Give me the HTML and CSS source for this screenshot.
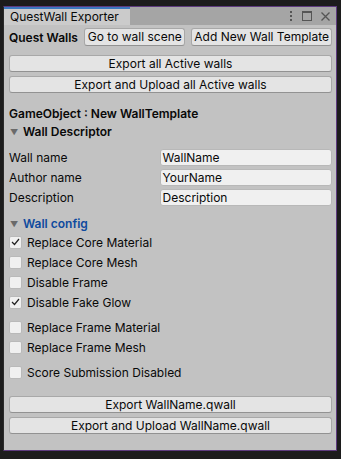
FILE: index.html
```html
<!DOCTYPE html>
<html>
<head>
<meta charset="utf-8">
<link rel="stylesheet" href="styles.css">
</head>
<body>
<div class="window">
  <div class="tabbar">
    <div class="tab">QuestWall Exporter</div>
    <div class="tab-icons">
      <svg width="4" height="10" viewBox="0 0 4 10"><rect x="1" y="0" width="2" height="2" fill="#555"/><rect x="1" y="4" width="2" height="2" fill="#555"/><rect x="1" y="8" width="2" height="2" fill="#555"/></svg>
      <svg width="10" height="10" viewBox="0 0 10 10"><rect x="0.5" y="0.5" width="9" height="9" fill="none" stroke="#555"/><rect x="0" y="0" width="10" height="2" fill="#555"/></svg>
      <svg width="9" height="9" viewBox="0 0 9 9"><path d="M0.5 0.5 L8.5 8.5 M8.5 0.5 L0.5 8.5" stroke="#555" stroke-width="1.3"/></svg>
    </div>
  </div>
  <div class="content">
    <div class="toprow">
      <span class="bold">Quest Walls</span>
      <button class="btn btn-scene">Go to wall scene</button>
      <button class="btn btn-add">Add New Wall Template</button>
    </div>
    <button class="btn wide first">Export all Active walls</button>
    <button class="btn wide">Export and Upload all Active walls</button>
    <div class="bold gameobject">GameObject : New WallTemplate</div>
    <div class="foldout bold"><span class="tri">&#9660;</span>Wall Descriptor</div>
    <div class="fields">
      <div class="field"><span class="label">Wall name</span><span class="input">WallName</span></div>
      <div class="field"><span class="label">Author name</span><span class="input">YourName</span></div>
      <div class="field"><span class="label">Description</span><span class="input">Description</span></div>
    </div>
    <div class="foldout bold blue config"><span class="tri">&#9660;</span>Wall config</div>
    <div class="checks">
      <div class="check"><span class="box checked"><svg width="9" height="8" viewBox="0 0 9 8"><path d="M1 4 L3.5 6.5 L8 1" fill="none" stroke="#222" stroke-width="1.2"/></svg></span>Replace Core Material</div>
      <div class="check"><span class="box"></span>Replace Core Mesh</div>
      <div class="check"><span class="box"></span>Disable Frame</div>
      <div class="check"><span class="box checked"><svg width="9" height="8" viewBox="0 0 9 8"><path d="M1 4 L3.5 6.5 L8 1" fill="none" stroke="#222" stroke-width="1.2"/></svg></span>Disable Fake Glow</div>
      <div class="check gap"><span class="box"></span>Replace Frame Material</div>
      <div class="check"><span class="box"></span>Replace Frame Mesh</div>
      <div class="check gap"><span class="box"></span>Score Submission Disabled</div>
    </div>
    <button class="btn wide export">Export WallName.qwall</button>
    <button class="btn wide">Export and Upload WallName.qwall</button>
  </div>
</div>
</body>
</html>
```

FILE: styles.css
```css
html, body {
  margin: 0;
  padding: 0;
  background: #1c1c1c;
}
body {
  width: 341px;
  height: 459px;
  overflow: hidden;
  font-family: Inter, "Noto Sans", sans-serif;
  font-size: 12px;
  color: #090909;
}
.window {
  margin: 6px 0 0 3px;
  width: 332px;
  height: 443px;
  border: 1px solid #5d3a7e;
  border-left-color: #2a2a2a;
  background: #c2c2c2;
  display: flex;
  flex-direction: column;
}
.tabbar {
  height: 18px;
  background: #a5a5a5;
  display: flex;
  align-items: stretch;
  justify-content: space-between;
}
.tab {
  width: 120px;
  background: #cbcbcb;
  border-top: 2px solid #3a78c0;
  padding-left: 6px;
  line-height: 16px;
  font-size: 12px;
}
.tab-icons {
  display: flex;
  align-items: center;
  gap: 9px;
  padding-right: 6px;
}
.content {
  flex: 1;
  padding: 3px 4px 0 4px;
  display: flex;
  flex-direction: column;
}
.bold { font-weight: 600; }
.toprow {
  display: flex;
  align-items: center;
  height: 18px;
}
.toprow .bold {
  width: 76px;
  padding-left: 1px;
}
.btn {
  font-family: inherit;
  font-size: 12px;
  color: #090909;
  background: #e4e4e4;
  border: 1px solid #a8a8a8;
  border-bottom-color: #929292;
  border-radius: 3px;
  height: 18px;
  padding: 0;
  line-height: 16px;
}
.btn-scene { width: 102px; margin-right: 6px; }
.btn-add { width: 142px; }
.wide {
  width: 323px;
  margin-left: 1px;
  height: 17px;
  margin-top: 4px;
}
.wide.first { margin-top: 9px; }
.gameobject {
  margin-top: 13px;
  padding-left: 1px;
  line-height: 16px;
}
.foldout {
  line-height: 16px;
  margin-top: 2px;
  display: flex;
  align-items: center;
}
.tri {
  color: #6a6a6a;
  font-size: 8px;
  width: 13px;
  padding-left: 2px;
}
.fields {
  margin-top: 9px;
  display: flex;
  flex-direction: column;
  gap: 3px;
}
.field {
  display: flex;
  align-items: center;
  height: 17px;
}
.label {
  width: 151px;
  padding-left: 1px;
}
.input {
  width: 169px;
  height: 15px;
  line-height: 15px;
  background: #f0f0f0;
  border: 1px solid #b8b8b8;
  border-radius: 3px;
  padding-left: 2px;
}
.blue { color: #0e4a9e; }
.config { margin-top: 10px; }
.checks {
  margin-top: 0;
  display: flex;
  flex-direction: column;
}
.check {
  height: 20px;
  display: flex;
  align-items: center;
  padding-left: 1px;
}
.check.gap { margin-top: 5px; }
.box {
  width: 13px;
  height: 13px;
  background: #f0f0f0;
  border: 1px solid #b9b9b9;
  border-radius: 2px;
  margin-right: 5px;
  box-sizing: border-box;
  display: flex;
  align-items: center;
  justify-content: center;
}
.export { margin-top: 14px; }
```
